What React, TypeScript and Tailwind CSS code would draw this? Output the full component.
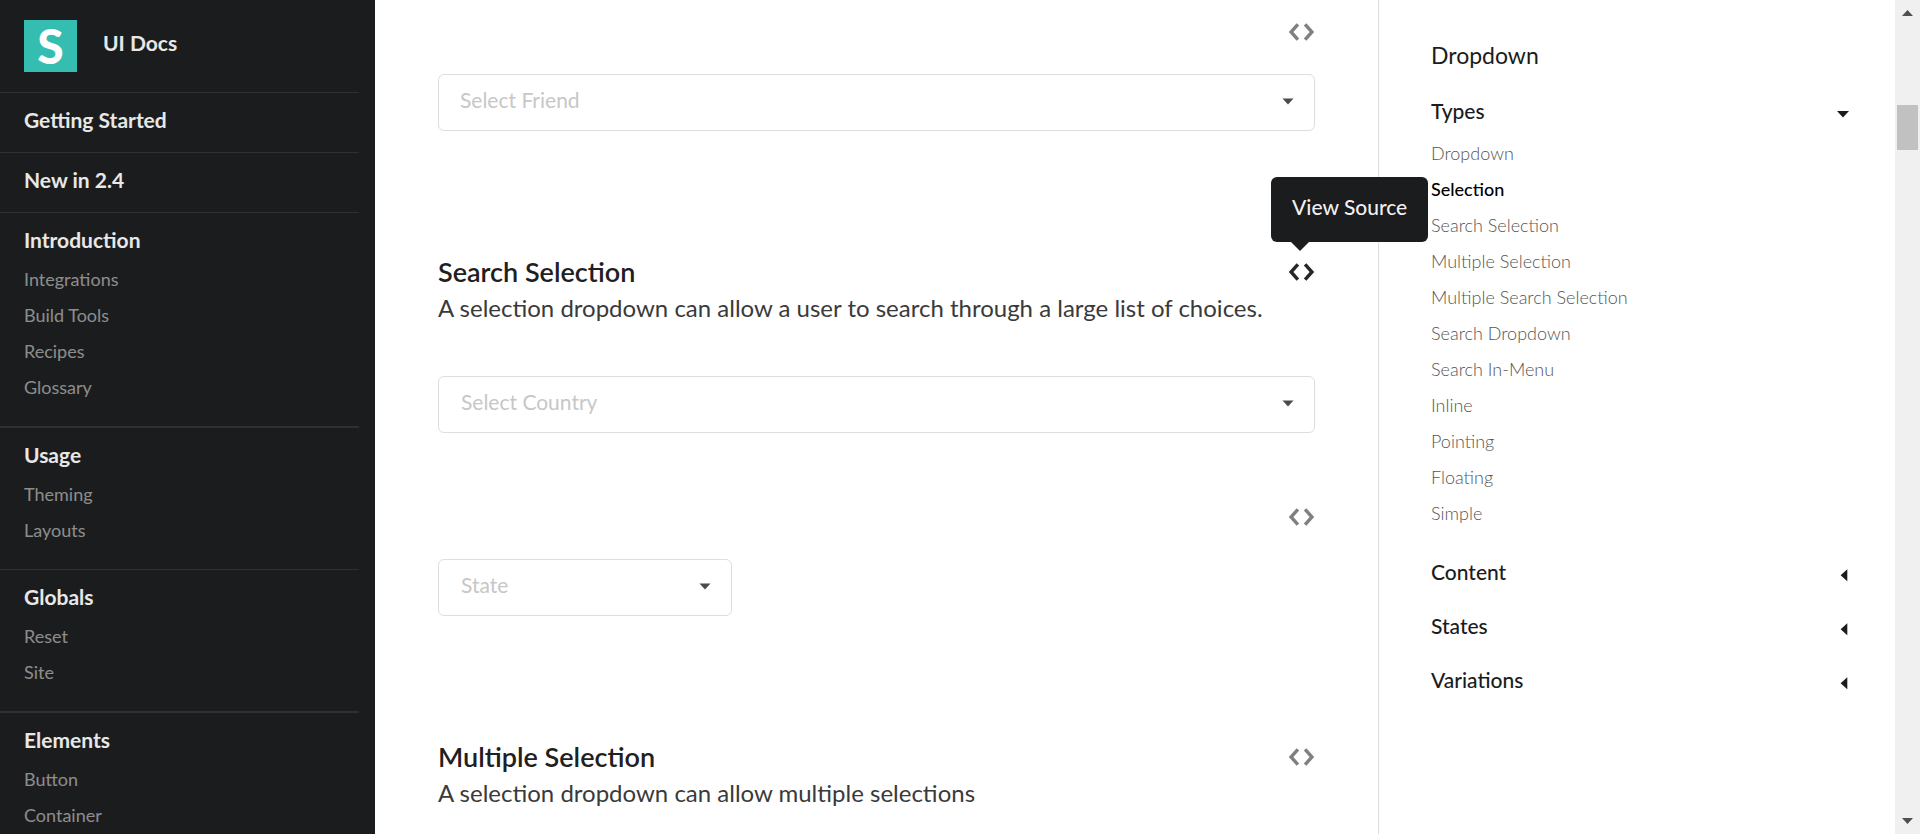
import React, { useState } from "react";

const sidebarSections = [
  { title: "Getting Started", links: [] as string[], divider: "border-b" },
  { title: "New in 2.4", links: [] as string[], divider: "border-b" },
  { title: "Introduction", links: ["Integrations", "Build Tools", "Recipes", "Glossary"], divider: "border-b-2" },
  { title: "Usage", links: ["Theming", "Layouts"], divider: "border-b" },
  { title: "Globals", links: ["Reset", "Site"], divider: "border-b-2" },
  { title: "Elements", links: ["Button", "Container"], divider: "border-b" },
];

const typeLinks = [
  "Dropdown",
  "Selection",
  "Search Selection",
  "Multiple Selection",
  "Multiple Search Selection",
  "Search Dropdown",
  "Search In-Menu",
  "Inline",
  "Pointing",
  "Floating",
  "Simple",
];

function CodeIcon() {
  return (
    <svg width="27" height="18" viewBox="0 0 27 18" fill="currentColor" aria-hidden="true">
      <path d="M0.8 9 8.6 0.2 11.2 2.6 5.4 9 11.2 15.4 8.6 17.8Z" />
      <path d="M26.2 9 18.4 0.2 15.8 2.6 21.6 9 15.8 15.4 18.4 17.8Z" />
    </svg>
  );
}

function CaretDown({ className }: { className: string }) {
  return (
    <svg width="12" height="7" viewBox="0 0 12 7" fill="currentColor" className={className} aria-hidden="true">
      <path d="M0.5 0.5H11.5L6 6.5Z" />
    </svg>
  );
}

function ViewSource({ open = false }: { open?: boolean }) {
  return (
    <div className="relative flex h-6 items-center">
      <button type="button" aria-label="View Source" className={open ? "text-[#262727]" : "text-[#808080]"}>
        <CodeIcon />
      </button>
      {open && (
        <div
          role="tooltip"
          className="absolute bottom-full -left-[17px] z-10 mb-[18px] rounded-md bg-[#1b1c1d] px-[21px] pt-[15px] pb-5 text-[21px] leading-[30px] font-medium whitespace-nowrap text-white/95"
        >
          View Source
          <svg width="18" height="9" viewBox="0 0 18 9" className="absolute top-full left-5 text-[#1b1c1d]" aria-hidden="true">
            <path d="M0 0H18L9 9Z" fill="currentColor" />
          </svg>
        </div>
      )}
    </div>
  );
}

function ExampleHeading({ title, text, open = false }: { title: string; text: string; open?: boolean }) {
  return (
    <header>
      <div className="flex items-center justify-between">
        <h4 className="text-[27px] leading-8 font-semibold text-[#1f2020]">{title}</h4>
        <ViewSource open={open} />
      </div>
      <p className="mt-0.5 text-2xl leading-[35px] font-normal text-[#3a3a3a]">{text}</p>
    </header>
  );
}

const fieldBox = "flex h-[57px] items-center rounded-md border border-[#dededf] bg-white px-5";

function SearchField({ label, width }: { label: string; width: string }) {
  return (
    <div className={`${fieldBox} ${width}`}>
      <input
        type="text"
        role="combobox"
        aria-expanded="false"
        aria-label={label}
        placeholder={label}
        className="min-w-0 flex-1 pb-1.5 pl-0.5 text-[21px] leading-7 outline-none placeholder:text-[#c7c7c7]"
      />
      <CaretDown className="mb-0.5 text-[#4a4b4b]" />
    </div>
  );
}

function Sidebar() {
  return (
    <nav className="w-[375px] shrink-0 overflow-hidden bg-[#1b1c1d] pr-4">
      <a href="#home" className="flex items-center gap-[26px] border-b border-[#2f3031] py-5 pl-6">
        <span className="flex h-[52px] w-[53px] items-center justify-center bg-[#35bdb2] text-5xl leading-none font-black text-white">
          S
        </span>
        <span className="pb-1.5 text-[21px] leading-[22px] font-bold text-white/90">UI Docs</span>
      </a>
      {sidebarSections.map((section) => (
        <section key={section.title} className={`${section.divider} border-[#2f3031] pt-4 pb-[21px] pl-6`}>
          <h2 className="text-[21px] leading-[22px] font-bold text-white/90">
            <a href="#section">{section.title}</a>
          </h2>
          {section.links.length > 0 && (
            <ul className="pt-2.5">
              {section.links.map((link) => (
                <li key={link} className="text-lg leading-9 text-white/50">
                  <a href="#page">{link}</a>
                </li>
              ))}
            </ul>
          )}
        </section>
      ))}
    </nav>
  );
}

function AccordionHeader({ title, open, onToggle }: { title: string; open: boolean; onToggle: () => void }) {
  return (
    <button
      type="button"
      aria-expanded={open}
      onClick={onToggle}
      className="flex w-full items-center justify-between pt-4 pb-[13px] text-left text-[21px] leading-[22px] font-medium text-[#1b1c1d]"
    >
      {title}
      <svg width="13" height="13" viewBox="0 0 13 13" fill="currentColor" className="mt-1.5" aria-hidden="true">
        <path d={open ? "M0 3H12L6 9.5Z" : "M10.3 0.3V12.3L3.6 6.3Z"} />
      </svg>
    </button>
  );
}

function TableOfContents() {
  const [active, setActive] = useState("Types");
  const toggle = (name: string) => setActive(active === name ? "" : name);
  return (
    <aside className="w-[517px] shrink-0 border-l border-[#dcdddd] pt-[43px] pr-[45px] pl-[52px]">
      <h3 className="mb-[17px] text-[23px] leading-6 font-normal text-[#1b1c1d]">Dropdown</h3>
      <AccordionHeader title="Types" open={active === "Types"} onToggle={() => toggle("Types")} />
      {active === "Types" && (
        <ul className="mb-3.5">
          {typeLinks.map((link) => (
            <li
              key={link}
              className={
                link === "Selection"
                  ? "text-lg leading-9 font-medium text-black"
                  : "text-lg leading-9 font-light text-[#555]"
              }
            >
              <a href="#example">{link}</a>
            </li>
          ))}
        </ul>
      )}
      {["Content", "States", "Variations"].map((title) => (
        <div key={title} className="mb-[3px]">
          <AccordionHeader title={title} open={active === title} onToggle={() => toggle(title)} />
        </div>
      ))}
    </aside>
  );
}

function ScrollRail() {
  return (
    <div className="flex w-[25px] shrink-0 flex-col items-center bg-[#f0f0f0] py-2.5" aria-hidden="true">
      <svg width="11" height="6" viewBox="0 0 11 6" fill="#505050">
        <path d="M5.5 0 11 6H0Z" />
      </svg>
      <div className="mt-[89px] h-[45px] w-[21px] bg-[#c1c1c1]" />
      <svg width="11" height="6" viewBox="0 0 11 6" fill="#505050" className="mt-auto">
        <path d="M0 0H11L5.5 6Z" />
      </svg>
    </div>
  );
}

export default function App() {
  return (
    <div className="flex h-screen overflow-hidden bg-white font-[Lato,sans-serif]">
      <Sidebar />
      <main className="min-w-0 flex-1 px-[63px] pt-5">
        <section className="mb-[125px]">
          <div className="mb-[30px] flex justify-end">
            <ViewSource />
          </div>
          <div className={fieldBox}>
            <select
              aria-label="Select Friend"
              defaultValue=""
              className="min-w-0 flex-1 appearance-none pb-1.5 pl-px text-[21px] leading-7 text-[#c7c7c7] outline-none"
            >
              <option value="">Select Friend</option>
            </select>
            <CaretDown className="mb-0.5 text-[#4a4b4b]" />
          </div>
        </section>

        <section className="mb-[72px]">
          <ExampleHeading
            title="Search Selection"
            text="A selection dropdown can allow a user to search through a large list of choices."
            open
          />
          <div className="mt-[51px]">
            <SearchField label="Select Country" width="w-full" />
          </div>
        </section>

        <section className="mb-[125px]">
          <div className="mb-[30px] flex justify-end">
            <ViewSource />
          </div>
          <SearchField label="State" width="w-[294px]" />
        </section>

        <ExampleHeading title="Multiple Selection" text="A selection dropdown can allow multiple selections" />
      </main>
      <TableOfContents />
      <ScrollRail />
    </div>
  );
}
